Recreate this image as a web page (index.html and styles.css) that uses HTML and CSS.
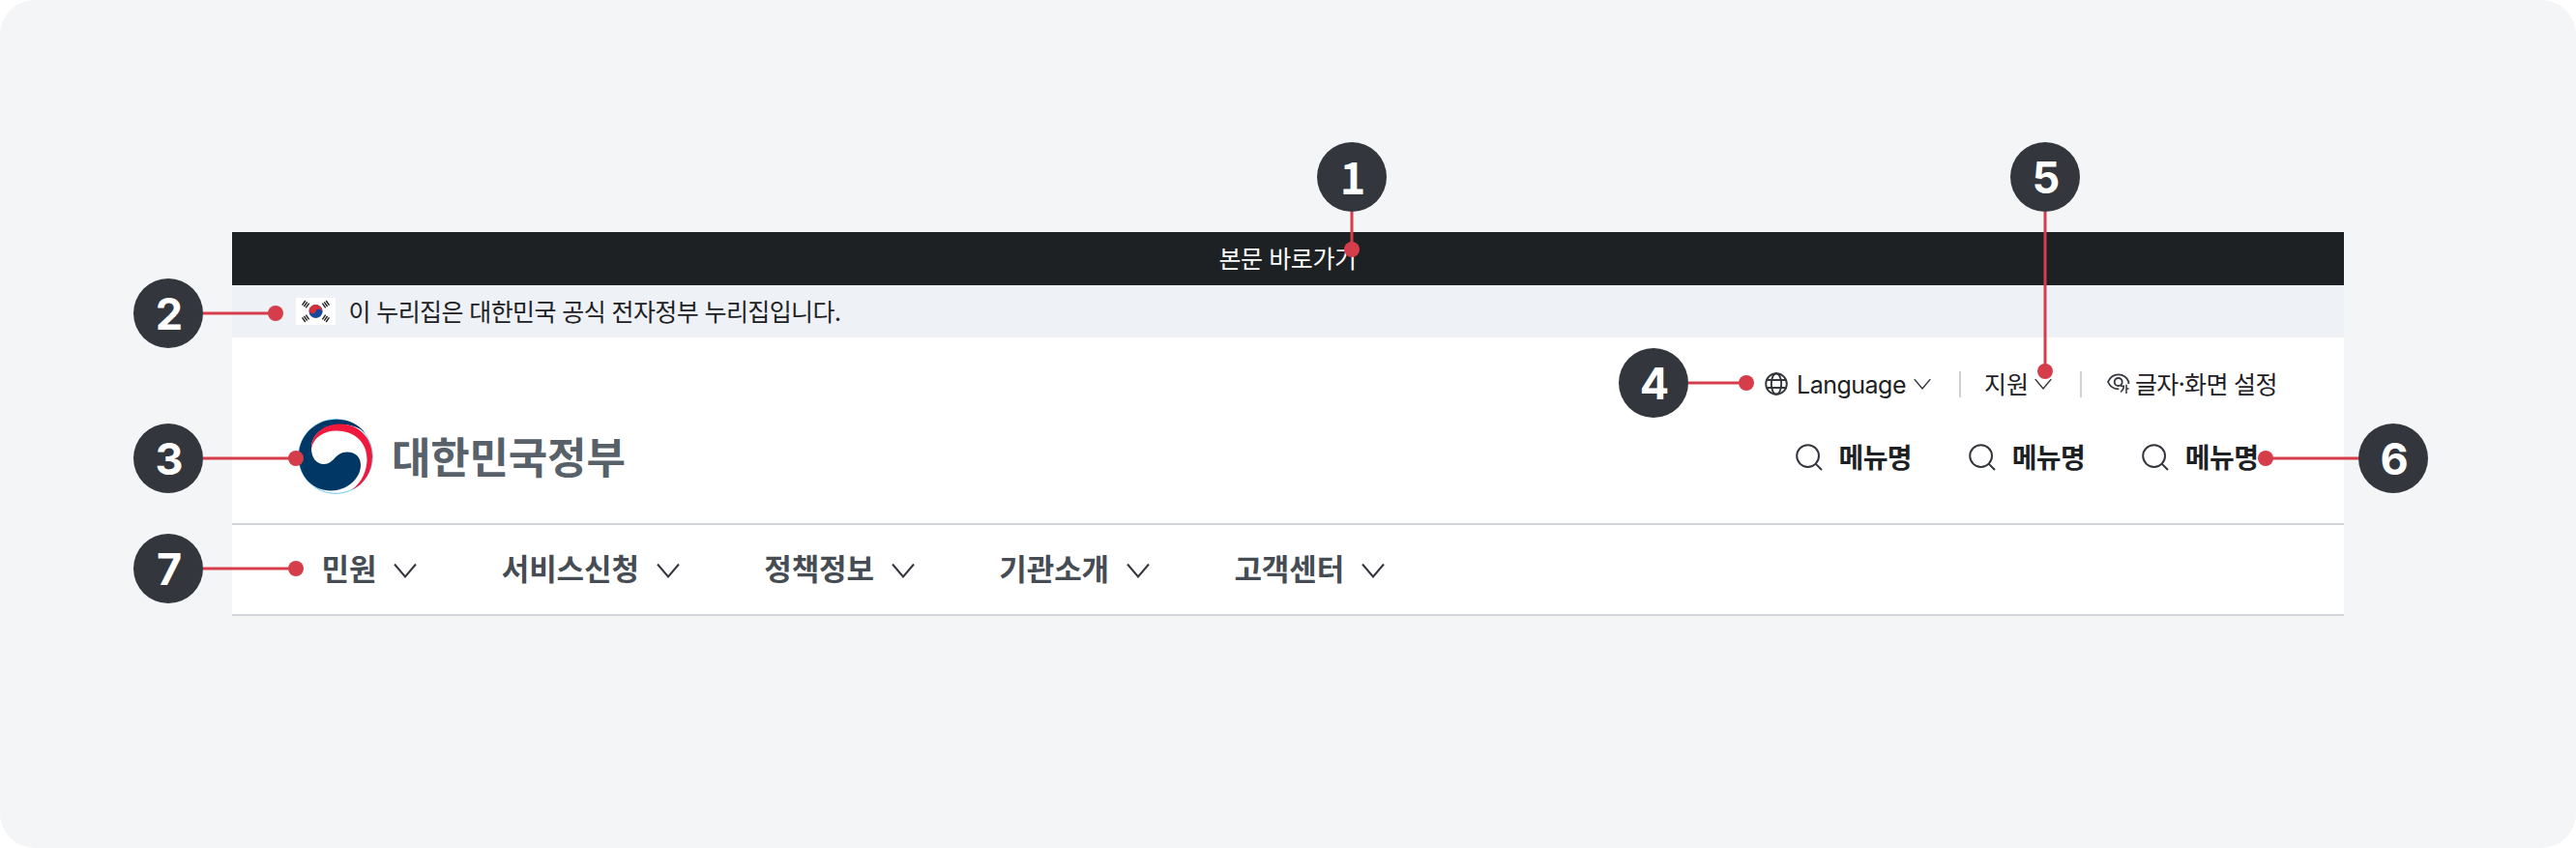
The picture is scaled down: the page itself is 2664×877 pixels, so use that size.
FILE: index.html
```html
<!DOCTYPE html>
<html lang="ko">
<head>
<meta charset="utf-8">
<title>대한민국정부</title>
<link rel="stylesheet" href="styles.css">
</head>
<body>
<svg class="defs" width="0" height="0">
  <symbol id="chev" viewBox="0 0 24 16"><path d="M1 1.5 12 14.5 23 1.5" fill="none" stroke="#33363d" stroke-width="2"/></symbol>
  <symbol id="search" viewBox="0 0 28 28"><g fill="none" stroke="#33363d" stroke-width="2"><circle cx="12.6" cy="12.6" r="11.4"/><path d="M20.6 20.6 27 27"/></g></symbol>
</svg>
<main class="canvas">
  <div class="board">
    <div class="skip"><a>본문 바로가기</a></div>
    <div class="official">
      <svg class="flag" width="41" height="28" viewBox="0 0 41 28">
        <rect width="41" height="28" fill="#fff"/>
        <g transform="translate(20.5 14) rotate(20)">
          <circle r="7" fill="#16489c"/>
          <path d="M-7 0A7 7 0 0 1 7 0A3.5 3.5 0 0 0 0 0A3.5 3.5 0 0 1 -7 0Z" fill="#d6303c"/>
        </g>
        <g stroke="#222" stroke-width="1.4">
          <path d="M6.500 7.700 9.800 3M8.400 9 11.700 4.300M10.300 10.300 13.600 5.600"/>
          <path d="M34.500 7.700 31.200 3M32.600 9 29.300 4.300M30.700 10.300 27.400 5.600"/>
          <path d="M6.500 20.300 9.800 25M8.400 19 11.700 23.700M10.300 17.700 13.600 22.400"/>
          <path d="M34.500 20.300 31.200 25M32.600 19 29.300 23.700M30.700 17.700 27.400 22.400"/>
        </g>
      </svg>
      <span>이 누리집은 대한민국 공식 전자정부 누리집입니다.</span>
    </div>
    <header class="header">
      <div class="brand">
        <svg width="78" height="78" viewBox="0 0 78 78">
          <circle cx="39" cy="39" r="38.4" fill="#fff" stroke="#6cc8f2" stroke-width="1"/>
          <path d="M70 15C60 2 45 -1 32 1.500C14 5 1 20 1 39C1 60 16 74.500 34 74.500C51 74.500 65 62 65 48C65 40 60 34.500 51 34.500C38 34.500 38 47 27 47C19 47 14 40 14 31C14 15 28 6 44 6C55 6 64 9 70 15Z" fill="#003764"/>
          <path d="M14 31C14 15 28 5.500 44 5.500C63 5.500 77 20 77 39C77 54 69 68 56 73.500C66 66 71.500 54 71.500 42C71.500 24 58 12.500 40 12.500C26 12.500 16 20 14 31Z" fill="#f0183c"/>
        </svg>
        <strong>대한민국정부</strong>
      </div>
      <div class="tools">
        <div class="links">
          <svg width="24" height="24" viewBox="0 0 24 24"><g fill="none" stroke="#33363d" stroke-width="1.9"><circle cx="12" cy="12" r="10.8"/><ellipse cx="12" cy="12" rx="5.200" ry="10.800"/><path d="M2.400 8H21.600M2.400 16H21.600"/></g></svg>
          <span class="lang">Language</span>
          <svg class="chev-s" width="20" height="12"><use href="#chev"/></svg>
          <i></i>
          <span class="support">지원</span>
          <svg class="chev-s" width="20" height="12"><use href="#chev"/></svg>
          <i></i>
          <svg class="eye" width="24" height="22" viewBox="0 0 24 22"><g fill="none" stroke="#33363d" stroke-width="1.8"><path d="M22.300 11V8.600C20.500 4.500 16.500 1.400 11.700 1.400C7 1.400 3 4.600 1 9C3 13.400 7 16.400 12.300 16.400"/><circle cx="11.700" cy="9" r="4"/></g><path d="M14 13.300H17.300Q17.300 17 14 19.500M20 11.700V21M20 16H22.600" fill="none" stroke="#33363d" stroke-width="1.500"/></svg>
          <span class="setting">글자·화면 설정</span>
        </div>
        <div class="menus">
          <a><svg width="28" height="28"><use href="#search"/></svg><span>메뉴명</span></a>
          <a><svg width="28" height="28"><use href="#search"/></svg><span>메뉴명</span></a>
          <a><svg width="28" height="28"><use href="#search"/></svg><span>메뉴명</span></a>
        </div>
      </div>
    </header>
    <nav class="gnb">
      <a><span>민원</span><svg width="24" height="16"><use href="#chev"/></svg></a>
      <a><span>서비스신청</span><svg width="24" height="16"><use href="#chev"/></svg></a>
      <a><span>정책정보</span><svg width="24" height="16"><use href="#chev"/></svg></a>
      <a><span>기관소개</span><svg width="24" height="16"><use href="#chev"/></svg></a>
      <a><span>고객센터</span><svg width="24" height="16"><use href="#chev"/></svg></a>
    </nav>
  </div>
  <svg class="leaders" width="2664" height="877">
    <g stroke="#d63d4a" stroke-width="3"><path d="M1398 219V258M2115 219V384M210 324H285M210 474H306M210 588H306M1746 396H1806M2343 474H2439"/></g>
    <g fill="#d63d4a"><circle cx="1398" cy="258" r="8"/><circle cx="2115" cy="384" r="8"/><circle cx="285" cy="324" r="8"/><circle cx="306" cy="474" r="8"/><circle cx="306" cy="588" r="8"/><circle cx="1806" cy="396" r="8"/><circle cx="2343" cy="474" r="8"/></g>
  </svg>
  <b class="pin p1">1</b><b class="pin p2">2</b><b class="pin p3">3</b><b class="pin p4">4</b><b class="pin p5">5</b><b class="pin p6">6</b><b class="pin p7">7</b>
</main>
</body>
</html>
```
FILE: styles.css
```css
* { box-sizing: border-box; }
body { margin: 0; background: #fff; font-family: "Noto Sans CJK KR", sans-serif; color: #1e2124; }
svg { display: block; flex: none; }
.defs { position: absolute; }
.canvas { position: relative; width: 2664px; height: 877px; padding: 240px; background: #f4f5f6; border-radius: 36px; }
.board { width: 2184px; height: 397px; background: #fff; white-space: nowrap; }
.skip { height: 54.5px; display: flex; align-items: center; justify-content: center; background: #1e2124; color: #fff; font-size: 25px; line-height: 54px; letter-spacing: -0.4px; padding: 0 1px 2px 0; }
.official { height: 54.5px; display: flex; align-items: center; gap: 14px; padding-left: 65.5px; background: #eef1f6; font-size: 25px; line-height: 54px; letter-spacing: -0.6px; }
.official span { padding-bottom: 2px; }
.header { height: 194px; display: flex; justify-content: space-between; border-bottom: 2px solid #d2d6db; }
.brand { display: flex; align-items: center; gap: 19px; height: 78px; margin: 84px 0 0 68px; }
.brand strong { font-size: 44px; line-height: 78px; color: #58616a; padding-bottom: 3px; letter-spacing: -0.2px; }
.tools { width: 601px; }
.links { display: flex; align-items: center; height: 54px; margin-top: 21px; padding-left: 2px; font-size: 25px; line-height: 54px; }
.links i { width: 2px; height: 27px; background: #cdd1d5; flex: none; }
.lang { width: 120px; margin-left: 9px; font-family: Inter, sans-serif; letter-spacing: -0.5px; padding-top: 1px; }
.chev-s { margin-right: 28px; }
.support { margin-left: 24px; width: 51px; padding-bottom: 2px; }
.eye { margin-left: 26px; }
.setting { margin-left: 5px; letter-spacing: -0.65px; padding-bottom: 2px; }
.menus { display: flex; gap: 59.2px; margin: 21px 0 0 34px; font-size: 28px; font-weight: 700; line-height: 54px; letter-spacing: -0.6px; }
.menus a { display: flex; align-items: center; gap: 16.5px; }
.menus span { padding-bottom: 2px; }
.gnb { height: 94px; display: flex; align-items: center; gap: 87.4px; padding-left: 92.5px; border-bottom: 2px solid #d2d6db; font-size: 31px; font-weight: 700; color: #464c53; letter-spacing: -0.1px; }
.gnb a { display: flex; align-items: center; gap: 18px; }
.gnb span { padding-bottom: 6px; }
.gnb svg { margin-top: 2px; }
.leaders { position: absolute; left: 0; top: 0; }
.pin { position: absolute; width: 72px; height: 72px; border-radius: 50%; background: #33363d; color: #fff; font-family: Inter, sans-serif; font-size: 45px; line-height: 73px; text-align: center; padding-left: 2px; }
.p1 { left: 1362px; top: 147px; font-family: "Noto Sans CJK KR", sans-serif; line-height: 69px; }
.p2 { left: 138px; top: 288px; }
.p3 { left: 138px; top: 438px; }
.p4 { left: 1674px; top: 360px; }
.p5 { left: 2079px; top: 147px; }
.p6 { left: 2439px; top: 438px; }
.p7 { left: 138px; top: 552px; }
```
